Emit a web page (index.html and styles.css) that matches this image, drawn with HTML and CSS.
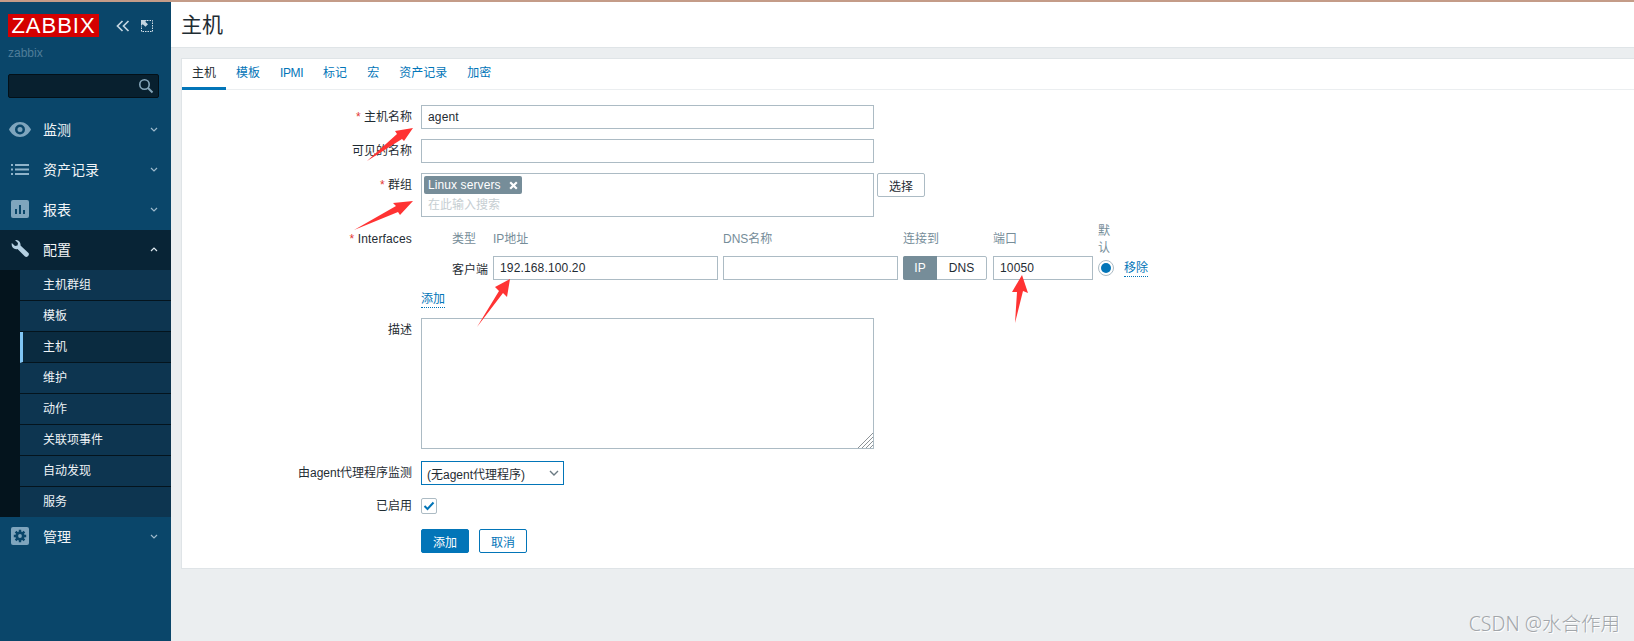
FILE: index.html
```html
<!DOCTYPE html>
<html lang="zh-CN">
<head>
<meta charset="utf-8">
<title>主机</title>
<link rel="stylesheet" href="styles.css">
</head>
<body>
<div class="app">
  <aside class="sidebar">
    <div class="brand">
      <div class="logo">ZABBIX</div>
      <svg class="ctl-collapse" width="14" height="12" viewBox="0 0 14 12"><path d="M6.500 1 1.500 6l5 5M12.500 1l-5 5 5 5" fill="none" stroke="#c3d5e0" stroke-width="1.700"/></svg>
      <svg class="ctl-expand" width="12" height="12" viewBox="0 0 12 12"><path d="M6 .5h5.500v11H.5V6" fill="none" stroke="#d3dfe7" stroke-dasharray="1.500 1"/><path d="M0 0h6L4.300 1.700 7 4.300 4.500 6.800 1.700 4.300 0 6z" fill="#c3d5e0"/></svg>
    </div>
    <div class="server">zabbix</div>
    <div class="search">
      <svg width="16" height="16" viewBox="0 0 16 16"><circle cx="6.500" cy="6.500" r="4.700" fill="none" stroke="#86a6ba" stroke-width="1.600"/><path d="M10 10l4.500 4.500" stroke="#86a6ba" stroke-width="2"/></svg>
    </div>
    <nav class="nav">
      <div class="nav-item">
        <span class="nav-icon"><svg width="22" height="15" viewBox="0 0 22 15"><path fill-rule="evenodd" d="M11 0c5 0 9 3.500 11 7.500C20 11.500 16 15 11 15S2 11.500 0 7.500C2 3.500 6 0 11 0zm0 2.500a5 5 0 1 0 0 10 5 5 0 0 0 0-10zm0 2.500a2.500 2.500 0 1 1 0 5 2.500 2.500 0 0 1 0-5z" fill="#7fa5bd"/></svg></span>
        <span>监测</span><svg class="chev" width="8" height="5" viewBox="0 0 8 5"><path d="M1 1l3 3 3-3" fill="none" stroke="#9db9cb" stroke-width="1.200"/></svg>
      </div>
      <div class="nav-item">
        <span class="nav-icon"><svg width="18" height="11" viewBox="0 0 18 11"><path d="M0 0h2v2H0zM4 0h14v2H4zM0 4.500h2v2H0zM4 4.500h14v2H4zM0 9h2v2H0zM4 9h14v2H4z" fill="#8fb3ca"/></svg></span>
        <span>资产记录</span><svg class="chev" width="8" height="5" viewBox="0 0 8 5"><path d="M1 1l3 3 3-3" fill="none" stroke="#9db9cb" stroke-width="1.200"/></svg>
      </div>
      <div class="nav-item">
        <span class="nav-icon"><svg width="18" height="18" viewBox="0 0 18 18"><rect width="18" height="18" rx="2" fill="#7fa5bd"/><path d="M4 9h2v5H4zM8 5h2v9H8zM12 10h2v4h-2z" fill="#0a466a"/></svg></span>
        <span>报表</span><svg class="chev" width="8" height="5" viewBox="0 0 8 5"><path d="M1 1l3 3 3-3" fill="none" stroke="#9db9cb" stroke-width="1.200"/></svg>
      </div>
      <div class="nav-item nav-open">
        <span class="nav-icon"><svg width="18" height="18" viewBox="0 0 18 18"><path d="M.8 3 4 6 6.500 5.500 7 3 4 0C7-.5 10 2 9.500 5.500L17.500 13c1.500 2-1.500 5-3.500 3.500L6.500 9C3 10 0 7 .8 3z" fill="#b4d0e2"/></svg></span>
        <span>配置</span><svg class="chev" width="8" height="5" viewBox="0 0 8 5"><path d="M1 4l3-3 3 3" fill="none" stroke="#dfe9f0" stroke-width="1.200"/></svg>
      </div>
      <div class="sub">
        <div class="sub-item">主机群组</div>
        <div class="sub-item">模板</div>
        <div class="sub-item sub-active">主机</div>
        <div class="sub-item">维护</div>
        <div class="sub-item">动作</div>
        <div class="sub-item">关联项事件</div>
        <div class="sub-item">自动发现</div>
        <div class="sub-item">服务</div>
      </div>
      <div class="nav-item">
        <span class="nav-icon"><svg width="18" height="18" viewBox="0 0 18 18"><rect width="18" height="18" rx="2" fill="#7fa5bd"/><path d="M9 2.800v12.400M2.800 9h12.400M4.600 4.600l8.800 8.800M13.400 4.600l-8.800 8.800" stroke="#0a466a" stroke-width="2.400"/><circle cx="9" cy="9" r="4.600" fill="#0a466a"/><circle cx="9" cy="9" r="1.900" fill="#7fa5bd"/></svg></span>
        <span>管理</span><svg class="chev" width="8" height="5" viewBox="0 0 8 5"><path d="M1 1l3 3 3-3" fill="none" stroke="#9db9cb" stroke-width="1.200"/></svg>
      </div>
    </nav>
  </aside>
  <main class="main">
    <header class="header"><h1 class="title">主机</h1></header>
    <section class="card">
      <div class="tabs">
        <a class="tab tab-active">主机</a>
        <a class="tab">模板</a>
        <a class="tab tab-ipmi">IPMI</a>
        <a class="tab">标记</a>
        <a class="tab">宏</a>
        <a class="tab">资产记录</a>
        <a class="tab">加密</a>
      </div>
      <form class="form">
        <div class="row">
          <label class="label"><span class="req">*</span> 主机名称</label>
          <input class="input w-full" type="text" value="agent">
        </div>
        <div class="row">
          <label class="label">可见的名称</label>
          <input class="input w-full" type="text">
        </div>
        <div class="row">
          <label class="label"><span class="req">*</span> 群组</label>
          <div class="multi">
            <span class="chip">Linux servers<svg width="9" height="9" viewBox="0 0 9 9"><path d="M1.200 1.200l6.600 6.600M7.800 1.200 1.200 7.800" stroke="#fff" stroke-width="2.200"/></svg></span>
            <span class="placeholder">在此输入搜索</span>
          </div>
          <button class="btn-alt" type="button">选择</button>
        </div>
        <div class="row row-if">
          <label class="label label-if"><span class="req">*</span> Interfaces</label>
          <div class="if-field">
            <div class="if-grid">
              <span class="th">类型</span>
              <span class="th">IP地址</span>
              <span class="th">DNS名称</span>
              <span class="th">连接到</span>
              <span class="th">端口</span>
              <span class="th th-default">默认</span>
              <span></span>
              <span class="td-type">客户端</span>
              <input class="input" type="text" value="192.168.100.20">
              <input class="input" type="text">
              <div class="seg"><span class="seg-on">IP</span><span class="seg-off">DNS</span></div>
              <input class="input" type="text" value="10050">
              <span class="radio"><span class="radio-dot"></span></span>
              <a class="link link-remove">移除</a>
            </div>
            <div><a class="link">添加</a></div>
          </div>
        </div>
        <div class="row row-desc">
          <label class="label">描述</label>
          <div class="desc-wrap">
            <textarea class="textarea"></textarea>
            <svg class="grip" width="15" height="15" viewBox="0 0 15 15"><path d="M0 15 15 0M4 15 15 4M8 15l7-7M12 15l3-3" stroke="#8d9397" stroke-width="1"/></svg>
          </div>
        </div>
        <div class="row">
          <label class="label">由agent代理程序监测</label>
          <div class="select">(无agent代理程序)<svg width="10" height="6" viewBox="0 0 10 6"><path d="M1 1l4 4 4-4" fill="none" stroke="#6b7a83" stroke-width="1.400"/></svg></div>
        </div>
        <div class="row row-check">
          <label class="label label-check">已启用</label>
          <span class="check"><svg width="12" height="10" viewBox="0 0 12 10"><path d="M1.500 5l3 3 6-6.500" fill="none" stroke="#0275b8" stroke-width="2"/></svg></span>
        </div>
        <div class="row row-actions">
          <span class="label"></span>
          <button class="btn-primary" type="button">添加</button>
          <button class="btn-outline" type="button">取消</button>
        </div>
      </form>
    </section>
  </main>
  <svg class="arrows" width="1634" height="641" viewBox="0 0 1634 641">
    <path d="M367 161 397 134 395 131 413 128 404 141 402 139z"/>
    <path d="M354 230 396 206 393 203 413 201 400 215 398 212z"/>
    <path d="M477 327 499 291 495 287 510 279 507 297 503 293z"/>
    <path d="M1015 323 1017 292 1012 292 1022 275 1028 293 1023 291z"/>
  </svg>
  <div class="watermark">CSDN @水合作用</div>
</div>
</body>
</html>
```

FILE: styles.css
```css
* { box-sizing: border-box; }
html, body { margin: 0; padding: 0; height: 100%; overflow: hidden; }
body {
  font-family: "Liberation Sans", "Noto Sans CJK SC", sans-serif;
  font-size: 12px;
  color: #1f2c33;
  background: #ebeef0;
}
.app {
  position: relative;
  display: flex;
  height: 641px;
  border-top: 2px solid #c49c88;
}

/* sidebar */
.sidebar { width: 171px; flex: none; background: #0a466a; color: #f2f5f7; }
.brand { display: flex; align-items: center; padding: 12px 0 0 8px; height: 35px; }
.logo {
  width: 91px; height: 23px;
  background: #d40000; color: #fff;
  font-size: 22px; line-height: 24px; letter-spacing: 1px; text-align: center;
}
.ctl-collapse { margin-left: 17px; }
.ctl-expand { margin-left: 11px; }
.server { margin: 9px 0 0 8px; height: 14px; line-height: 14px; color: #4f7d99; font-size: 12px; }
.search {
  display: flex; align-items: center; justify-content: flex-end;
  margin: 14px 0 0 8px; width: 151px; height: 24px; padding-right: 4px;
  background: #08202f; border: 1px solid #031018; border-radius: 2px;
}
.nav { margin-top: 12px; }
.nav-item { display: flex; align-items: center; height: 40px; font-size: 14px; padding: 0 13px 2px 0; }
.nav-open { background: #082436; }
.nav-icon { display: flex; align-items: center; justify-content: center; width: 43px; padding-right: 3px; flex: none; }
.chev { margin-left: auto; }
.sub { background: #04141d; padding-left: 20px; }
.sub-item {
  height: 31px; padding-left: 23px; line-height: 30px;
  background: #0d3550; border-bottom: 1px solid #04141d; color: #eef3f6;
}
.sub-item:last-child { height: 30px; border-bottom: 0; }
.sub-active { background: #0a2b40; border-left: 3px solid #80c6f5; padding-left: 20px; }

/* main */
.main { flex: 1; min-width: 0; }
.header { height: 46px; background: #fff; border-bottom: 1px solid #dfe4e7; padding-left: 10px; }
.title { margin: 0; font-size: 21px; font-weight: 400; line-height: 45px; }
.card {
  margin: 10px 0 0 10px;
  background: #fff;
  border: 1px solid #dfe4e7;
  border-right: 0;
}
.tabs { display: flex; height: 31px; border-bottom: 1px solid #ebeef0; }
.tab {
  height: 31px; padding: 0 10px; line-height: 29px;
  color: #0275b8; border-bottom: 3px solid transparent;
}
.tab-ipmi { letter-spacing: -.4px; }
.tab-active { color: #1f2c33; border-bottom-color: #0275b8; }

/* form */
.form { display: flex; flex-direction: column; gap: 10px; padding: 15px 0; }
.row { display: flex; align-items: flex-start; }
.label { width: 230px; margin-right: 9px; flex: none; line-height: 24px; text-align: right; }
.req { color: #e33734; }
.input {
  height: 24px; padding: 0 6px; margin: 0;
  font: inherit; letter-spacing: .15px; color: #1f2c33;
  background: #fff; border: 1px solid #acbbc4; border-radius: 0; outline: 0;
}
.w-full { width: 453px; }
.multi {
  display: flex; flex-direction: column; align-items: flex-start;
  width: 453px; height: 44px; padding: 2px;
  border: 1px solid #acbbc4;
}
.chip {
  display: flex; align-items: center; gap: 8px;
  height: 18px; padding: 0 4px; letter-spacing: .1px;
  background: #768d99; color: #fff; border-radius: 2px;
}
.placeholder { margin: 2px 0 0 4px; line-height: 18px; color: #c6ced2; }
.btn-alt {
  width: 48px; height: 24px; margin: 0 0 0 3px; padding: 0;
  font: inherit; color: #1f2c33; background: #fff;
  border: 1px solid #acbbc4; border-radius: 2px;
}
.row-if { margin-top: -5px; }
.label-if { padding-top: 5px; letter-spacing: .15px; }
.if-field { display: flex; flex-direction: column; gap: 11px; }
.if-grid {
  display: grid;
  grid-template-columns: 36px 225px 175px 85px 100px 16px auto;
  column-gap: 5px;
  align-items: center;
  padding-left: 31px;
}
.th { color: #768d99; line-height: 17px; }
.th-default { width: 16px; transform: translateY(1px); }
.td-type { white-space: nowrap; }
.if-grid .input { width: 100%; }
.seg { display: flex; width: 84px; height: 24px; line-height: 22px; text-align: center; border: 1px solid #acbbc4; border-radius: 2px; }
.seg-on { width: 34px; margin: -1px 0 -1px -1px; line-height: 24px; background: #768d99; color: #fff; border-radius: 2px 0 0 2px; }
.seg-off { flex: 1; }
.radio {
  display: flex; align-items: center; justify-content: center;
  width: 16px; height: 16px; border: 1px solid #acbbc4; border-radius: 50%;
}
.radio-dot { width: 10px; height: 10px; background: #0275b8; border-radius: 50%; }
.link { display: inline-block; color: #0275b8; line-height: 16px; border-bottom: 1px dotted #0275b8; }
.link-remove { justify-self: start; margin-left: 5px; }
.desc-wrap { position: relative; width: 453px; height: 131px; margin-bottom: 2px; }
.textarea {
  display: block; width: 100%; height: 100%; margin: 0; padding: 5px; resize: none;
  font: inherit; background: #fff; border: 1px solid #acbbc4; border-radius: 0; outline: 0;
}
.grip { position: absolute; right: 1px; bottom: 1px; }
.select {
  display: flex; align-items: center; justify-content: space-between;
  width: 143px; height: 24px; padding: 0 4px 0 5px;
  background: #fff; border: 1px solid #0275b8; outline: 0;
}
.row-check { height: 22px; align-items: center; }
.label-check { line-height: 24px; }
.check {
  display: flex; align-items: center; justify-content: center;
  width: 16px; height: 16px; border: 1px solid #acbbc4; border-radius: 2px;
}
.row-actions { margin-top: 2px; }
.btn-primary, .btn-outline {
  height: 24px; margin: 0; padding: 0; font: inherit; border-radius: 2px; border: 1px solid #0275b8;
}
.btn-primary { width: 48px; background: #0275b8; color: #fff; }
.btn-outline { width: 48px; margin-left: 10px; background: #fff; color: #0275b8; }

/* overlays */
.arrows { position: absolute; left: 0; top: -2px; pointer-events: none; }
.arrows path { fill: #ff3333; }
.watermark {
  position: absolute; right: 14px; bottom: 5px;
  font-family: "Noto Sans", "Noto Sans CJK SC", sans-serif;
  font-size: 19.5px; line-height: 24px; font-weight: 300;
  color: #a2a6aa; text-shadow: 1px 1px 0 #fff;
}
```
